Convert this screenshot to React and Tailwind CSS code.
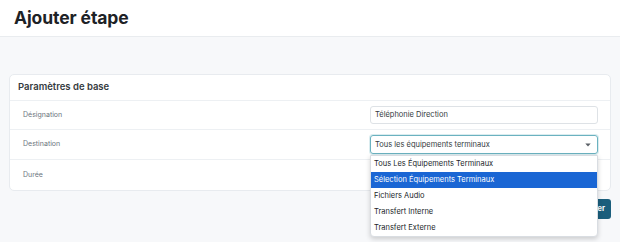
import React from 'react';

const options = [
    'Tous Les Équipements Terminaux',
    'Sélection Équipements Terminaux',
    'Fichiers Audio',
    'Transfert Interne',
    'Transfert Externe',
];

const Row = ({ label, children, last, tall }) => (
    <div className={`grid grid-cols-[360px_1fr] items-center ${tall ? 'h-[30px]' : 'h-[29px]'} ${last ? '' : 'border-b border-[#edf0f3]'}`}>
        <span className="pl-[13px] text-[7px] text-[#6c757d]">{label}</span>
        <div className="pr-[12px]">{children}</div>
    </div>
);

const App = () => {
    return (
        <div className="w-[620px] h-[242px] bg-[#f7f8fa] font-['Inter',sans-serif] overflow-hidden">
            <div className="h-[37px] bg-white border-b border-[#e9ecef] px-[14px] flex items-center">
                <h1 className="text-[17.5px] font-bold text-[#1d2226] tracking-[-0.1px]">Ajouter étape</h1>
            </div>

            <div className="px-[9px] pt-[37px]">
                <div className="bg-white rounded-[5px] border border-[#e8ebef]">
                    <div className="h-[26px] flex items-center px-[8px] border-b border-[#edf0f3]">
                        <h2 className="text-[9.5px] font-semibold text-[#343a40]">Paramètres de base</h2>
                    </div>
                    <Row label="Désignation">
                        <div className="h-[18px] flex items-center border border-[#dee2e6] rounded-[3px] px-[4px] text-[7.5px] text-[#343a40]">
                            Téléphonie Direction
                        </div>
                    </Row>
                    <Row label="Destination" tall>
                        <div className="relative">
                            <div className="h-[19px] flex items-center justify-between border border-[#6bb2c0] rounded-[3px] px-[4px] text-[7.5px] text-[#343a40] shadow-[0_0_0_1px_rgba(107,178,192,0.25)]">
                                <span>Tous les équipements terminaux</span>
                                <svg width="6" height="4" viewBox="0 0 6 4" className="mr-[2px]">
                                    <path d="M0.3 0.5 H5.7 L3 3.6 Z" fill="#5a6066" />
                                </svg>
                            </div>
                            <ul className="absolute left-0 right-0 top-[20px] z-10 bg-white border border-[#d9dde2] rounded-b-[4px] shadow-[0_2px_5px_rgba(0,0,0,0.18)] overflow-hidden">
                                {options.map((opt, i) => (
                                    <li
                                        key={opt}
                                        className={`h-[16px] flex items-center px-[3px] text-[7.5px] ${i === 1 ? 'bg-[#1a66d4] text-white' : 'text-[#212529]'}`}
                                    >
                                        {opt}
                                    </li>
                                ))}
                            </ul>
                        </div>
                    </Row>
                    <Row label="Durée" last tall>
                        <div />
                    </Row>
                </div>

                <div className="flex justify-end mt-[8px]">
                    <button className="h-[20px] px-[6px] rounded-[3px] bg-[#1b5e7c] text-white text-[7.5px] font-bold">
                        Enregistrer
                    </button>
                </div>
            </div>
        </div>
    );
};

export default App;
